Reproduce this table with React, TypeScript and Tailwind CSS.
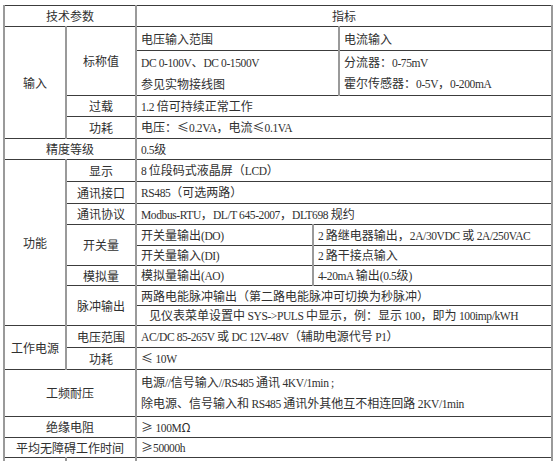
import type { ReactNode } from "react";

// 拆分中西文：ASCII 段用衬线字体，近似宋体的半角字形
function Mix({ t }: { t: string }) {
  const parts = t.split(/([\x20-\x7e]+)/);
  return (
    <>
      {parts.map((p, i) =>
        /^[\x20-\x7e]+$/.test(p) ? (
          <span
            key={i}
            className="font-['Liberation_Serif',serif] text-[11.5px] tracking-[-0.4px] leading-[14px]"
          >
            {p}
          </span>
        ) : (
          <span key={i}>{p}</span>
        )
      )}
    </>
  );
}

type CellProps = {
  children?: ReactNode;
  rowSpan?: number;
  colSpan?: number;
  label?: boolean;
  className?: string;
};

function Cell({ children, rowSpan, colSpan, label, className = "" }: CellProps) {
  return (
    <td
      rowSpan={rowSpan}
      colSpan={colSpan}
      className={`border-x-2 border-x-[#9a9a9a] border-y border-y-[#3c3c3c] align-middle p-0 ${
        label ? "text-center" : "text-left pl-[4px]"
      } ${className}`}
    >
      {typeof children === "string" ? <Mix t={children} /> : children}
    </td>
  );
}

function Lines({ items }: { items: string[] }) {
  return (
    <div className="flex flex-col">
      {items.map((s) => (
        <div key={s} className="h-[21px] flex items-center">
          <span>
            <Mix t={s} />
          </span>
        </div>
      ))}
    </div>
  );
}

export default function App() {
  return (
    <div className="w-[554px] h-[461px] overflow-hidden bg-white pt-[5px] pl-[3px]">
      <table className="w-[548px] table-fixed border-collapse text-[12px] leading-[14px] text-[#303030] font-['Noto_Sans_CJK_SC',sans-serif]">
        <colgroup>
          <col className="w-[62px]" />
          <col className="w-[70px]" />
          <col className="w-[177px]" />
          <col className="w-[26px]" />
          <col className="w-[213px]" />
        </colgroup>
        <tbody>
          <tr className="h-[21px]">
            <Cell label colSpan={2}>技术参数</Cell>
            <Cell label colSpan={3}>指标</Cell>
          </tr>

          {/* 输入 */}
          <tr className="h-[24px]">
            <Cell label rowSpan={4}>输入</Cell>
            <Cell label rowSpan={2}>标称值</Cell>
            <Cell colSpan={2}>电压输入范围</Cell>
            <Cell>电流输入</Cell>
          </tr>
          <tr className="h-[45px]">
            <Cell colSpan={2}>
              <Lines items={["DC 0-100V、DC 0-1500V", "参见实物接线图"]} />
            </Cell>
            <Cell>
              <Lines items={["分流器：0-75mV", "霍尔传感器：0-5V，0-200mA"]} />
            </Cell>
          </tr>
          <tr className="h-[21px]">
            <Cell label>过载</Cell>
            <Cell colSpan={3}>1.2 倍可持续正常工作</Cell>
          </tr>
          <tr className="h-[22px]">
            <Cell label>功耗</Cell>
            <Cell colSpan={3}>电压：≤0.2VA，电流≤0.1VA</Cell>
          </tr>
          <tr className="h-[21px]">
            <Cell label colSpan={2}>精度等级</Cell>
            <Cell colSpan={3}>0.5级</Cell>
          </tr>

          {/* 功能 */}
          <tr className="h-[22px]">
            <Cell label rowSpan={8}>功能</Cell>
            <Cell label>显示</Cell>
            <Cell colSpan={3}>8 位段码式液晶屏（LCD）</Cell>
          </tr>
          <tr className="h-[22px]">
            <Cell label>通讯接口</Cell>
            <Cell colSpan={3}>RS485（可选两路）</Cell>
          </tr>
          <tr className="h-[21px]">
            <Cell label>通讯协议</Cell>
            <Cell colSpan={3}>Modbus-RTU，DL/T 645-2007，DLT698 规约</Cell>
          </tr>
          <tr className="h-[21px]">
            <Cell label rowSpan={2}>开关量</Cell>
            <Cell>开关量输出(DO)</Cell>
            <Cell colSpan={2}>2 路继电器输出，2A/30VDC 或 2A/250VAC</Cell>
          </tr>
          <tr className="h-[20px]">
            <Cell>开关量输入(DI)</Cell>
            <Cell colSpan={2}>2 路干接点输入</Cell>
          </tr>
          <tr className="h-[20px]">
            <Cell label>模拟量</Cell>
            <Cell>模拟量输出(AO)</Cell>
            <Cell colSpan={2}>4-20mA 输出(0.5级)</Cell>
          </tr>
          <tr className="h-[20px]">
            <Cell label rowSpan={2}>脉冲输出</Cell>
            <Cell colSpan={3}>两路电能脉冲输出（第二路电能脉冲可切换为秒脉冲）</Cell>
          </tr>
          <tr className="h-[20px]">
            <Cell colSpan={3} className="pl-[12px]">
              {"见仪表菜单设置中 SYS->PULS 中显示，例：显示 100，即为 100imp/kWH"}
            </Cell>
          </tr>

          {/* 工作电源 */}
          <tr className="h-[22px]">
            <Cell label rowSpan={2}>工作电源</Cell>
            <Cell label>电压范围</Cell>
            <Cell colSpan={3}>AC/DC 85-265V 或 DC 12V-48V（辅助电源代号 P1）</Cell>
          </tr>
          <tr className="h-[22px]">
            <Cell label>功耗</Cell>
            <Cell colSpan={3}>≤ 10W</Cell>
          </tr>

          <tr className="h-[47px]">
            <Cell label colSpan={2}>工频耐压</Cell>
            <Cell colSpan={3}>
              <Lines
                items={[
                  "电源//信号输入//RS485 通讯 4KV/1min ;",
                  "除电源、信号输入和 RS485 通讯外其他互不相连回路 2KV/1min",
                ]}
              />
            </Cell>
          </tr>
          <tr className="h-[21px]">
            <Cell label colSpan={2}>绝缘电阻</Cell>
            <Cell colSpan={3}>≥ 100MΩ</Cell>
          </tr>
          <tr className="h-[20px]">
            <Cell label colSpan={2}>平均无障碍工作时间</Cell>
            <Cell colSpan={3}>≥50000h</Cell>
          </tr>
          <tr className="h-[21px]">
            <Cell label></Cell>
            <Cell label></Cell>
            <Cell colSpan={3}></Cell>
          </tr>
        </tbody>
      </table>
    </div>
  );
}
